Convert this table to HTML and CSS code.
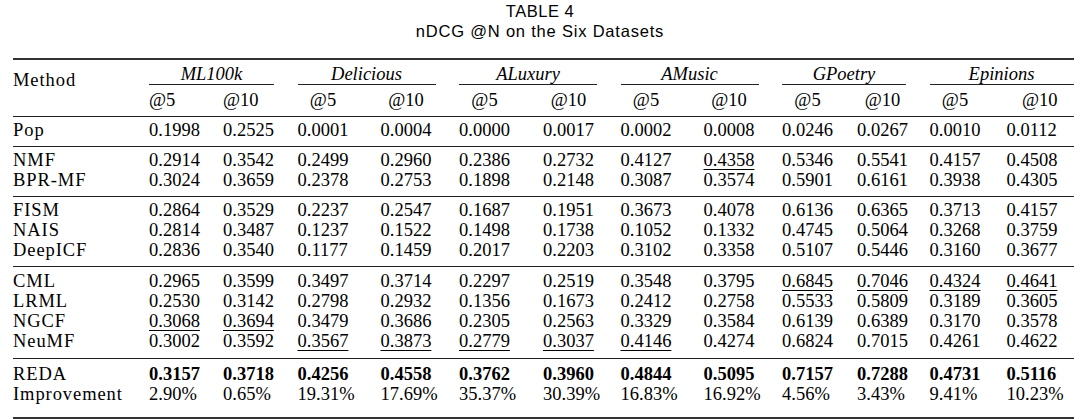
FILE: index.html
```html
<!DOCTYPE html>
<html lang="en">
<head>
<meta charset="utf-8">
<title>TABLE 4 nDCG @N on the Six Datasets</title>
<link rel="stylesheet" href="styles.css">
</head>
<body>
<div class="page">
  <div class="caption">
    <div class="cap1">TABLE 4</div>
    <div class="cap2">nDCG @N on the Six Datasets</div>
  </div>
  <div class="table">
    <div class="grid head">
      <div class="method">Method</div>
      <div class="ds">ML100k</div>
      <div class="ds">Delicious</div>
      <div class="ds">ALuxury</div>
      <div class="ds">AMusic</div>
      <div class="ds">GPoetry</div>
      <div class="ds last">Epinions</div>
      <div class="at l"><span>@5</span></div><div class="at l"><span>@10</span></div>
      <div class="at"><span>@5</span></div><div class="at"><span>@10</span></div>
      <div class="at"><span>@5</span></div><div class="at"><span>@10</span></div>
      <div class="at"><span>@5</span></div><div class="at"><span>@10</span></div>
      <div class="at"><span>@5</span></div><div class="at"><span>@10</span></div>
      <div class="at"><span>@5</span></div><div class="at r"><span>@10</span></div>
    </div>

    <div class="grid group">
      <div class="m">Pop</div>
      <div>0.1998</div><div>0.2525</div><div>0.0001</div><div>0.0004</div><div>0.0000</div><div>0.0017</div>
      <div>0.0002</div><div>0.0008</div><div>0.0246</div><div>0.0267</div><div>0.0010</div><div>0.0112</div>
    </div>

    <div class="grid group">
      <div class="m">NMF</div>
      <div>0.2914</div><div>0.3542</div><div>0.2499</div><div>0.2960</div><div>0.2386</div><div>0.2732</div>
      <div>0.4127</div><div class="u">0.4358</div><div>0.5346</div><div>0.5541</div><div>0.4157</div><div>0.4508</div>
      <div class="m">BPR-MF</div>
      <div>0.3024</div><div>0.3659</div><div>0.2378</div><div>0.2753</div><div>0.1898</div><div>0.2148</div>
      <div>0.3087</div><div>0.3574</div><div>0.5901</div><div>0.6161</div><div>0.3938</div><div>0.4305</div>
    </div>

    <div class="grid group">
      <div class="m">FISM</div>
      <div>0.2864</div><div>0.3529</div><div>0.2237</div><div>0.2547</div><div>0.1687</div><div>0.1951</div>
      <div>0.3673</div><div>0.4078</div><div>0.6136</div><div>0.6365</div><div>0.3713</div><div>0.4157</div>
      <div class="m">NAIS</div>
      <div>0.2814</div><div>0.3487</div><div>0.1237</div><div>0.1522</div><div>0.1498</div><div>0.1738</div>
      <div>0.1052</div><div>0.1332</div><div>0.4745</div><div>0.5064</div><div>0.3268</div><div>0.3759</div>
      <div class="m">DeepICF</div>
      <div>0.2836</div><div>0.3540</div><div>0.1177</div><div>0.1459</div><div>0.2017</div><div>0.2203</div>
      <div>0.3102</div><div>0.3358</div><div>0.5107</div><div>0.5446</div><div>0.3160</div><div>0.3677</div>
    </div>

    <div class="grid group tall">
      <div class="m">CML</div>
      <div>0.2965</div><div>0.3599</div><div>0.3497</div><div>0.3714</div><div>0.2297</div><div>0.2519</div>
      <div>0.3548</div><div>0.3795</div><div class="u">0.6845</div><div class="u">0.7046</div><div class="u">0.4324</div><div class="u">0.4641</div>
      <div class="m">LRML</div>
      <div>0.2530</div><div>0.3142</div><div>0.2798</div><div>0.2932</div><div>0.1356</div><div>0.1673</div>
      <div>0.2412</div><div>0.2758</div><div>0.5533</div><div>0.5809</div><div>0.3189</div><div>0.3605</div>
      <div class="m">NGCF</div>
      <div class="u">0.3068</div><div class="u">0.3694</div><div>0.3479</div><div>0.3686</div><div>0.2305</div><div>0.2563</div>
      <div>0.3329</div><div>0.3584</div><div>0.6139</div><div>0.6389</div><div>0.3170</div><div>0.3578</div>
      <div class="m">NeuMF</div>
      <div>0.3002</div><div>0.3592</div><div class="u">0.3567</div><div class="u">0.3873</div><div class="u">0.2779</div><div class="u">0.3037</div>
      <div class="u">0.4146</div><div>0.4274</div><div>0.6824</div><div>0.7015</div><div>0.4261</div><div>0.4622</div>
    </div>

    <div class="grid group final">
      <div class="m">REDA</div>
      <div class="b">0.3157</div><div class="b">0.3718</div><div class="b">0.4256</div><div class="b">0.4558</div><div class="b">0.3762</div><div class="b">0.3960</div>
      <div class="b">0.4844</div><div class="b">0.5095</div><div class="b">0.7157</div><div class="b">0.7288</div><div class="b">0.4731</div><div class="b">0.5116</div>
      <div class="m">Improvement</div>
      <div>2.90%</div><div>0.65%</div><div>19.31%</div><div>17.69%</div><div>35.37%</div><div>30.39%</div>
      <div>16.83%</div><div>16.92%</div><div>4.56%</div><div>3.43%</div><div>9.41%</div><div>10.23%</div>
    </div>
  </div>
</div>
</body>
</html>
```
FILE: styles.css
```css
html, body {
  margin: 0;
  padding: 0;
  background: #ffffff;
  color: #000000;
}

.page {
  width: 1080px;
  padding-top: 1px;
}

.caption {
  font-family: "Liberation Sans", Arial, sans-serif;
  font-size: 16.5px;
  line-height: 20px;
  text-align: center;
}

.cap1 {
  letter-spacing: 0.5px;
}

.cap2 {
  letter-spacing: 0.8px;
}

.table {
  margin: 17px 0 0 13px;
  width: 1060.5px;
  font-family: "Liberation Serif", "Times New Roman", serif;
  font-size: 18.5px;
  line-height: 20px;
  border-top: 2px solid #333333;
  border-bottom: 2px solid #333333;
}

.grid {
  display: grid;
  grid-template-columns: 136px 74px 74.5px 83px 78.5px 84px 77.5px 83px 78.5px 75px 72.5px 77px 67px;
  white-space: nowrap;
}

.head {
  padding: 4px 0 6px;
  row-gap: 5px;
}

.method {
  grid-row: span 2;
  padding-top: 6px;
  letter-spacing: 0.05em;
}

.ds {
  grid-column: span 2;
  margin-right: 23.5px;
  border-bottom: 1px solid #222222;
  text-align: center;
  font-style: italic;
}

.ds.last {
  margin-right: 0;
}

.at span {
  display: inline-block;
  width: 51px;
  text-align: center;
}

.at.l span {
  text-align: left;
}

.at.r span {
  text-align: right;
}

.group {
  border-top: 1px solid #222222;
  padding: 3px 0 6px;
}

.group.tall {
  padding-top: 4px;
  padding-bottom: 7px;
}

.group.final {
  padding-top: 5px;
  padding-bottom: 13px;
}

.m {
  letter-spacing: 0.05em;
}

.u {
  text-decoration: underline;
  text-decoration-thickness: 1px;
  text-underline-offset: 3px;
}

.b {
  font-weight: bold;
}
```
